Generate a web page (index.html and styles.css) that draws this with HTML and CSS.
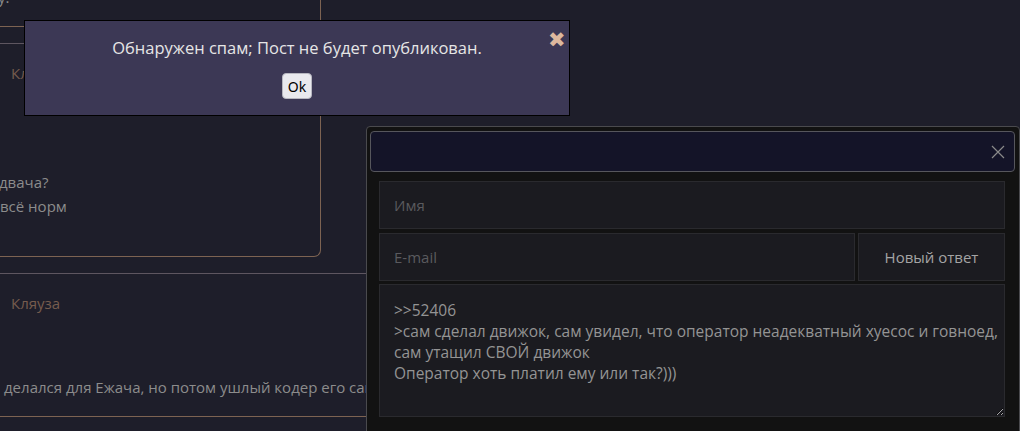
FILE: index.html
```html
<!DOCTYPE html>
<html lang="ru">
<head>
  <meta charset="UTF-8" />
  <title>Тред</title>
  <meta name="viewport" content="width=device-width, initial-scale=1.0" />
  <link rel="stylesheet" href="styles.css">
</head>
<body>

<div class="thread">
  <div class="post post-box">
    <div class="post-tail">у.</div>
    <div class="quote-line"></div>
    <div class="quote-line grey"></div>
    <div class="post-name">Кляуза</div>
    <div class="post-text">
      <p class="l1">двача?</p>
      <p class="l2">всё норм</p>
    </div>
  </div>

  <div class="post post-flat">
    <div class="post-name">Кляуза</div>
    <div class="post-text">
      <p>делался для Ежача, но потом ушлый кодер его сам утащил</p>
    </div>
  </div>
</div>

<!-- всплывающее сообщение об ошибке -->
<div class="alert">
  <span class="alert-close">✖</span>
  <p class="alert-msg">Обнаружен спам; Пост не будет опубликован.</p>
  <button class="alert-ok">Ok</button>
</div>

<!-- окно ответа -->
<div class="reply">
  <div class="reply-head">
    <svg class="reply-x" width="14" height="14" viewBox="0 0 14 14">
      <path d="M1 1 L13 13 M13 1 L1 13" stroke="#8a8a8a" stroke-width="1.2" fill="none"/>
    </svg>
  </div>
  <div class="reply-body">
    <input class="field" type="text" placeholder="Имя">
    <div class="row">
      <input class="field" type="text" placeholder="E-mail">
      <button class="send">Новый ответ</button>
    </div>
    <textarea class="field message">&gt;&gt;52406
&gt;сам сделал движок, сам увидел, что оператор неадекватный хуесос и говноед, сам утащил СВОЙ движок
Оператор хоть платил ему или так?)))</textarea>
  </div>
</div>

</body>
</html>
```

FILE: styles.css
```css
body {
  margin: 0;
  font-family: 'Open Sans', 'Noto Sans', sans-serif;
  background-color: #1e1e2a;
  color: #8c8c8c;
  overflow: hidden;
  height: 431px;
}
p {
  margin: 0;
}

/* тред, сдвинут влево за край окна */
.thread {
  margin-left: -300px;
  width: 1400px;
}
.post-box {
  width: 621px;
  height: 257px;
  box-sizing: border-box;
  border-right: 1px solid #7d6352;
  border-bottom: 1px solid #7d6352;
  border-bottom-right-radius: 7px;
  position: relative;
}
.post-tail {
  position: absolute;
  top: -13px;
  left: 298px;
  font-size: 15px;
}
.quote-line {
  position: absolute;
  left: 0;
  right: 0;
  top: 26px;
  height: 1px;
  background: #7d6352;
}
.quote-line.grey {
  top: 43px;
  background: #5e5660;
}
.post-box .post-name {
  position: absolute;
  top: 63px;
  left: 311px;
}
.post-box .post-text {
  position: absolute;
  top: 170px;
  left: 299px;
  line-height: 24px;
}
.post-box .l2 {
  margin-left: 1px;
}
.post-name {
  font-size: 15px;
  color: #765c4e;
}
.post-text {
  font-size: 15px;
  color: #8c8c8c;
}
.post-flat {
  margin-top: 16px;
  border-top: 1px solid #5e5660;
  border-bottom: 1px solid #7d6352;
  height: 144px;
  box-sizing: border-box;
  padding: 19px 0 0 311px;
}
.post-flat .post-text {
  margin-top: 64px;
  margin-left: -7px;
  white-space: nowrap;
}

/* сообщение */
.alert {
  position: absolute;
  top: 20px;
  left: 24px;
  width: 546px;
  height: 96px;
  box-sizing: border-box;
  background: #3c3855;
  border: 1px solid #000;
  text-align: center;
  padding-top: 15px;
}
.alert-msg {
  font-size: 16.5px;
  color: #e6e6e6;
  line-height: 24px;
}
.alert-close {
  position: absolute;
  top: 4px;
  right: 3px;
  font-size: 21px;
  line-height: 28px;
  color: #ddb89e;
  cursor: pointer;
}
.alert-ok {
  margin-top: 13px;
  padding: 0 5px;
  height: 26px;
  font-family: 'Noto Sans', 'Open Sans', sans-serif;
  font-size: 14px;
  color: #000;
  background: #e9e9ee;
  border: 1px solid #b7b7c0;
  border-radius: 4px;
}

/* окно ответа */
.reply {
  position: absolute;
  top: 126px;
  left: 366px;
  width: 654px;
  height: 330px;
  box-sizing: border-box;
  background: #121212;
  border: 1px solid #4a4a4e;
  border-radius: 4px;
  padding: 4px 4px 0 3px;
}
.reply-head {
  height: 41px;
  box-sizing: border-box;
  background: #141428;
  border: 1px solid #56565c;
  border-radius: 4px;
  display: flex;
  align-items: center;
  justify-content: flex-end;
  padding-right: 9px;
}
.reply-body {
  display: flex;
  flex-direction: column;
  gap: 4px;
  padding: 9px 10px 0 9px;
}
.row {
  display: flex;
  gap: 3px;
}
.row .field {
  flex: 1;
}
.field {
  box-sizing: border-box;
  height: 48px;
  background: #1b1b20;
  border: 1px solid #2a2a2e;
  color: #949494;
  font-family: 'Open Sans', 'Noto Sans', sans-serif;
  font-size: 15px;
  padding: 0 14px;
  outline: none;
}
.field::placeholder {
  color: #5a5a5e;
}
.send {
  width: 147px;
  height: 48px;
  background: #1b1b20;
  border: 1px solid #2a2a2e;
  color: #a4a4a4;
  font-family: 'Open Sans', 'Noto Sans', sans-serif;
  font-size: 15px;
}
.message {
  height: 133px;
  margin-top: -1px;
  padding: 15px 4px 15px 14px;
  font-size: 15.5px;
  line-height: 21px;
  resize: both;
}
```
